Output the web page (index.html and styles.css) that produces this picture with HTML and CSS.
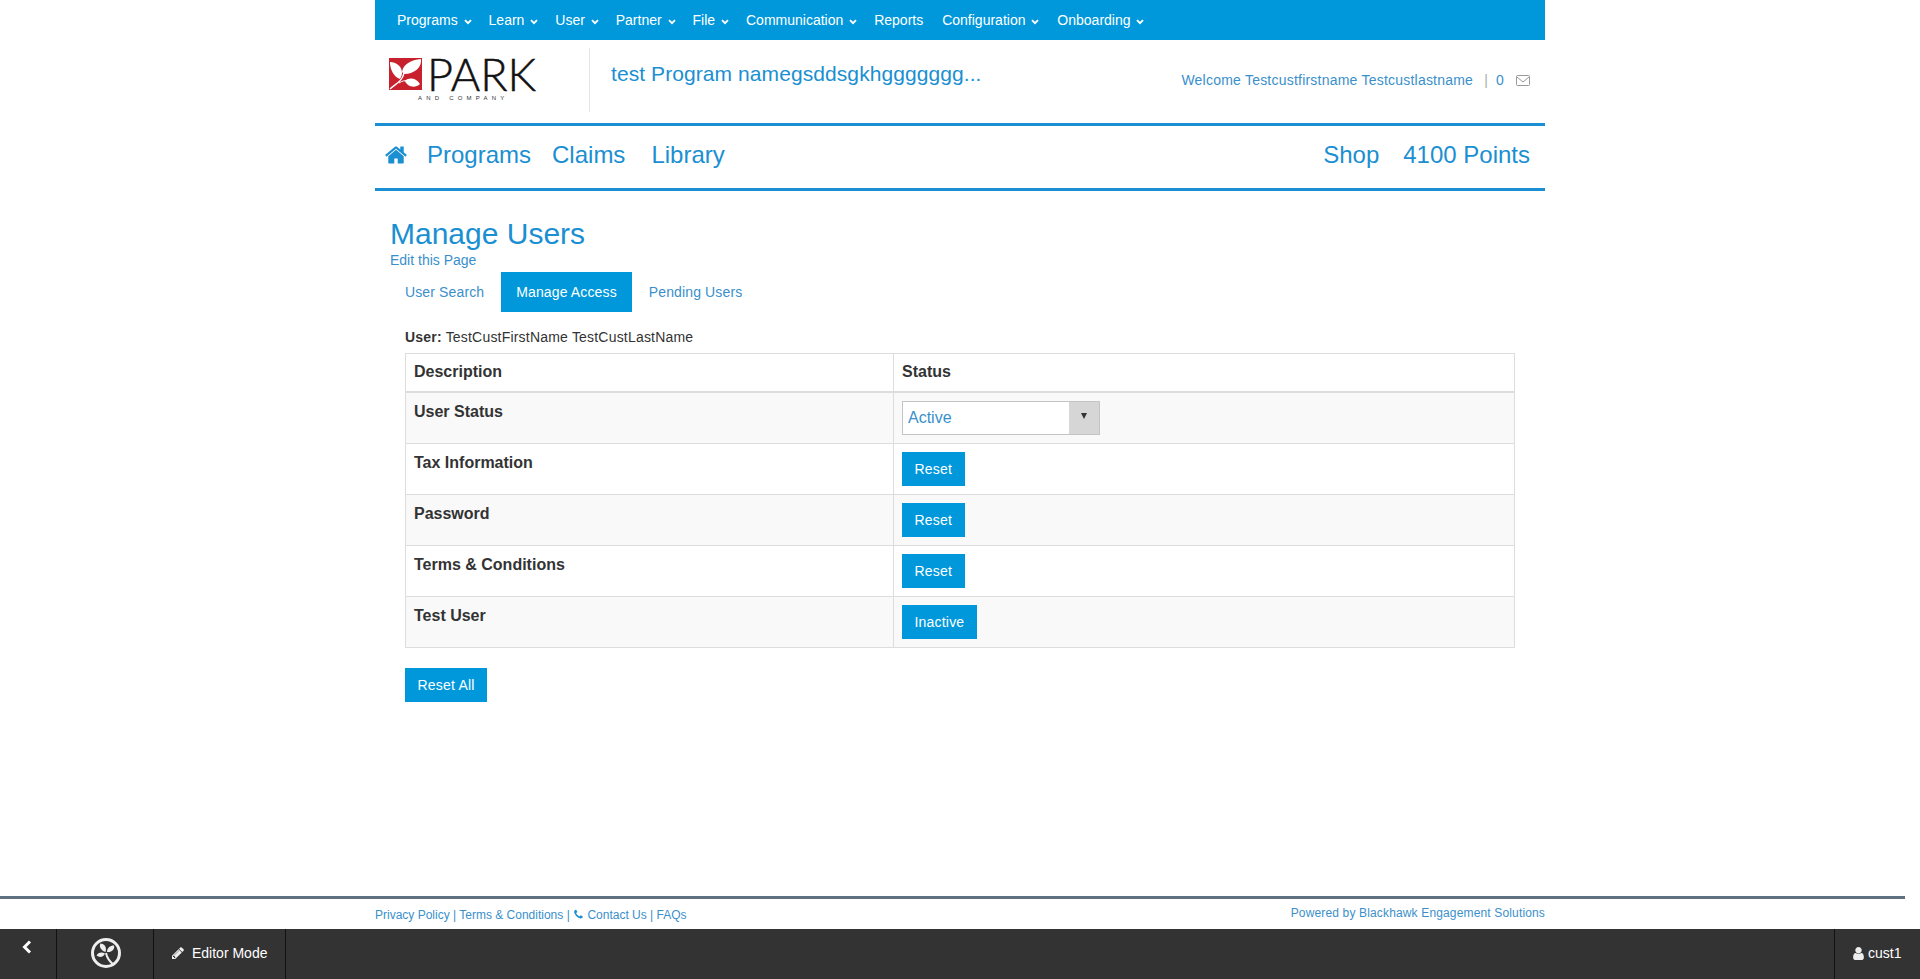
FILE: index.html
```html
<!DOCTYPE html>
<html lang="en">
<head>
    <meta charset="UTF-8">
    <title>Manage Users</title>
    <link rel="stylesheet" href="styles.css">
</head>
<body>
<svg class="icon_defs" width="0" height="0">
    <symbol id="chevron_down" viewBox="0 0 8 6">
        <polyline points="1,1.2 4,4.2 7,1.2" fill="none" stroke="#fff" stroke-width="1.9"/>
    </symbol>
</svg>

<div class="wrap">
    <ul class="top_menu">
        <li>Programs <svg class="chevron"><use href="#chevron_down"/></svg></li>
        <li>Learn <svg class="chevron"><use href="#chevron_down"/></svg></li>
        <li>User <svg class="chevron"><use href="#chevron_down"/></svg></li>
        <li>Partner <svg class="chevron"><use href="#chevron_down"/></svg></li>
        <li>File <svg class="chevron"><use href="#chevron_down"/></svg></li>
        <li>Communication <svg class="chevron"><use href="#chevron_down"/></svg></li>
        <li>Reports</li>
        <li class="menu_config">Configuration <svg class="chevron"><use href="#chevron_down"/></svg></li>
        <li class="menu_onboard">Onboarding <svg class="chevron"><use href="#chevron_down"/></svg></li>
    </ul>

    <div class="header">
        <div class="logo">
            <svg class="logo_mark" viewBox="0 0 33 32">
                <rect width="33" height="32" fill="#c9202e"/>
                <path d="M13 14C14 6 22 2 32 1 33 9 26 16 15 16Z" fill="#fff"/>
                <path d="M1 4C7 4 13 8 13 15 13 17 12 19 11 21 5 19 1 12 1 4Z" fill="#fff"/>
                <path d="M16 23C20 19 27 20 31 26 27 30 19 30 16 23Z" fill="#fff"/>
                <path d="M1 31C6 26 13 24 15 15" fill="none" stroke="#fff" stroke-width="1.4"/>
                <path d="M10 25C13 23 16 22 20 23" fill="none" stroke="#fff" stroke-width="1"/>
            </svg>
            <div class="logo_text">
                <span class="logo_name">PARK</span>
                <span class="logo_sub">AND COMPANY</span>
            </div>
        </div>
        <div class="program_name">test Program namegsddsgkhggggggg...</div>
        <div class="welcome">
            <span>Welcome Testcustfirstname Testcustlastname</span>
            <span class="welcome_sep">|</span>
            <span>0</span>
            <svg class="envelope" viewBox="0 0 14 11">
                <rect x="0.5" y="0.5" width="13" height="10" rx="1" fill="none" stroke="#999"/>
                <polyline points="1,2 7,7 13,2" fill="none" stroke="#999"/>
            </svg>
        </div>
    </div>

    <div class="main_nav">
        <svg class="home_icon" viewBox="0 0 1792 1792">
            <path d="M1472 992v480q0 26-19 45t-45 19h-384v-384h-256v384h-384q-26 0-45-19t-19-45v-480q0-1 .5-3t.5-3l575-474 575 474q1 2 1 6zm223-69l-62 74q-8 9-21 11h-3q-13 0-21-7l-692-577-692 577q-12 8-24 7-13-2-21-11l-62-74q-8-10-7-23.500t11-21.500l719-599q32-26 76-26t76 26l244 204v-195q0-14 9-23t23-9h192q14 0 23 9t9 23v408l219 182q10 8 11 21.500t-7 23.500z"/>
        </svg>
        <a class="nav_programs">Programs</a>
        <a class="nav_claims">Claims</a>
        <a class="nav_library">Library</a>
        <a class="nav_shop">Shop</a>
        <a class="nav_points">4100 Points</a>
    </div>

    <h1 class="page_title">Manage Users</h1>
    <a class="edit_link">Edit this Page</a>

    <div class="content">
        <ul class="tabs">
            <li>User Search</li>
            <li class="tab_active">Manage Access</li>
            <li>Pending Users</li>
        </ul>

        <p class="user_line"><b>User:</b> TestCustFirstName TestCustLastName</p>

        <table class="access_table">
            <tr>
                <th class="col_desc">Description</th>
                <th>Status</th>
            </tr>
            <tr>
                <td class="row_label">User Status</td>
                <td>
                    <div class="status_select">
                        <span class="select_value">Active</span>
                        <span class="select_arrow"><i class="arrow_down"></i></span>
                    </div>
                </td>
            </tr>
            <tr>
                <td class="row_label">Tax Information</td>
                <td><button class="btn">Reset</button></td>
            </tr>
            <tr>
                <td class="row_label">Password</td>
                <td><button class="btn">Reset</button></td>
            </tr>
            <tr>
                <td class="row_label">Terms &amp; Conditions</td>
                <td><button class="btn">Reset</button></td>
            </tr>
            <tr>
                <td class="row_label">Test User</td>
                <td><button class="btn">Inactive</button></td>
            </tr>
        </table>

        <button class="btn btn_all">Reset All</button>
    </div>
</div>

<div class="footer">
    <div class="footer_links">
        <span class="footer_left">Privacy Policy | Terms &amp; Conditions |
            <svg class="phone_icon" viewBox="0 0 1792 1792">
                <path d="M1600 1240q0 27-10 70.500t-21 68.500q-21 50-122 106-94 51-186 51-27 0-53-3.500t-57.500-12.500-47-14.500-55.500-20.500-49-18q-98-35-175-83-127-79-264-216t-216-264q-48-77-83-175-3-9-18-49t-20.500-55.500-14.500-47-12.500-57.500-3.500-53q0-92 51-186 56-101 106-122 25-11 68.500-21t70.500-10q14 0 21 3 18 6 53 76 11 19 30 54t35 63.500 31 53.500q3 4 17.500 25t21.500 35.500 7 28.500q0 20-28.500 50t-62 55-62 53-28.500 46q0 9 5 22.500t8.500 20.500 14 24 11.500 19q76 137 174 235t235 174q2 1 19 11.500t24 14 20.500 8.500 22.500 5q18 0 46-28.500t53-62 55-62 50-28.500q14 0 28.500 7t35.500 21.500 25 17.500q25 15 53.500 31t63.500 35 54 30q70 35 76 53 3 7 3 21z"/>
            </svg>
            Contact Us | FAQs</span>
        <span class="footer_right">Powered by Blackhawk Engagement Solutions</span>
    </div>
</div>

<div class="editor_bar">
    <div class="bar_item bar_back">
        <svg width="10" height="14" viewBox="0 0 10 14">
            <polyline points="8,1.500 2.500,7 8,12.500" fill="none" stroke="#fff" stroke-width="3"/>
        </svg>
    </div>
    <div class="bar_item bar_brand">
        <svg width="32" height="34" viewBox="0 0 32 34">
            <circle cx="16" cy="16" r="13.500" fill="none" stroke="#eee" stroke-width="3"/>
            <path d="M15.500 15C10 13 9 9 10.500 6.500 14.500 7 17 10 15.500 15Z" fill="#eee"/>
            <path d="M17 15C17 11 20 8.500 24 8.500 25 12 22 15.500 17 15Z" fill="#eee"/>
            <path d="M15 16.500C11.500 14.500 8 15.500 6.500 18.500 10 21 13.500 20 15 16.500Z" fill="#eee"/>
            <path d="M16 16C17 21 20 25 24 28" fill="none" stroke="#eee" stroke-width="2"/>
        </svg>
    </div>
    <div class="bar_item bar_editor">
        <svg class="pencil_icon" viewBox="0 0 1792 1792">
            <path d="M491 1536l91-91-235-235-91 91v107h128v128h107zm523-928q0-22-22-22-10 0-17 7l-542 542q-7 7-7 17 0 22 22 22 10 0 17-7l542-542q7-7 7-17zm-54-192l416 416-832 832h-416v-416zm683 96q0 53-37 90l-166 166-416-416 166-165q36-38 90-38 53 0 91 38l235 234q37 39 37 91z"/>
        </svg>
        Editor Mode
    </div>
    <div class="bar_item bar_user">
        <svg class="user_icon" viewBox="0 0 1792 1792">
            <path d="M1536 1399q0 109-62.500 187t-150.500 78h-854q-88 0-150.500-78t-62.500-187q0-85 8.500-160.500t31.500-152 58.500-131 94-89 134.500-34.500q131 128 313 128t313-128q76 0 134.500 34.500t94 89 58.500 131 31.500 152 8.500 160.500zm-256-887q0 159-112.500 271.500t-271.500 112.500-271.500-112.500-112.500-271.500 112.500-271.500 271.500-112.500 271.500 112.500 112.500 271.500z"/>
        </svg>
        cust1
    </div>
</div>
</body>
</html>
```

FILE: styles.css
```css
* {
    margin: 0;
    padding: 0;
    box-sizing: border-box;
}

html, body {
    height: 100%;
}

body {
    display: flex;
    flex-direction: column;
    min-height: 979px;
    font-family: "Liberation Sans", Arial, sans-serif;
    font-size: 14px;
    line-height: 20px;
    color: #333;
    background-color: #fff;
    overflow: hidden;
}

ul {
    list-style: none;
}

.icon_defs {
    position: absolute;
}

.wrap {
    flex: 1;
    width: 1170px;
    margin: 0 auto;
}

/* top menu */
.top_menu {
    display: flex;
    gap: 17px;
    height: 40px;
    padding-left: 22px;
    align-items: center;
    background-color: #0098db;
    color: #fff;
}

.chevron {
    width: 8px;
    height: 6px;
    margin-left: 2px;
}

.menu_config {
    margin-left: 2px;
}

.menu_onboard {
    margin-left: 1px;
}

/* header */
.header {
    display: flex;
    height: 86px;
    border-bottom: 3px solid #1a8fd1;
}

.logo {
    display: flex;
    width: 215px;
    height: 64px;
    margin-top: 8px;
    padding: 10px 0 0 14px;
    border-right: 1px solid #e5e5e5;
}

.logo_mark {
    width: 33px;
    height: 32px;
}

.logo_text {
    margin-left: 5px;
    width: 110px;
}

.logo_name {
    display: block;
    font-family: Lato, "Liberation Sans", sans-serif;
    font-weight: 300;
    font-size: 45px;
    line-height: 32px;
    -webkit-text-stroke: 0.5px #111;
    color: #111;
}

.logo_sub {
    display: block;
    margin: 4px 0 0 -9px;
    font-size: 6px;
    line-height: 8px;
    letter-spacing: 4.2px;
    white-space: nowrap;
    color: #333;
}

.program_name {
    margin: 22px 0 0 21px;
    font-size: 21px;
    line-height: 24px;
    letter-spacing: 0.08px;
    color: #1a8fd1;
}

.welcome {
    display: flex;
    align-items: center;
    margin: 30px 15px 0 auto;
    height: 20px;
    letter-spacing: 0.22px;
    color: #3a8fcb;
}

.welcome_sep {
    margin: 0 8px 0 11px;
    color: #aaa;
}

.envelope {
    width: 14px;
    height: 11px;
    margin-left: 12px;
}

/* main nav */
.main_nav {
    display: flex;
    align-items: center;
    height: 65px;
    padding-bottom: 4px;
    border-bottom: 3px solid #1a8fd1;
    font-size: 24px;
    color: #1a8fd1;
}

.home_icon {
    width: 24px;
    height: 24px;
    margin-left: 9px;
    fill: #1a8fd1;
}

.nav_programs {
    margin-left: 19px;
}

.nav_claims {
    margin-left: 21px;
}

.nav_library {
    margin-left: 26px;
}

.nav_shop {
    margin-left: auto;
}

.nav_points {
    margin: 0 15px 0 24px;
}

/* page title */
.page_title {
    margin: 26px 0 0 15px;
    font-size: 30px;
    font-weight: normal;
    line-height: 33px;
    color: #1a8fd1;
}

.edit_link {
    display: block;
    margin: 0 0 2px 15px;
    color: #3a8fcb;
}

.content {
    padding-left: 30px;
}

.tabs {
    display: flex;
    gap: 2px;
    margin-left: -15px;
    letter-spacing: 0.13px;
    color: #3a8fcb;
}

.tabs li {
    padding: 10px 15px;
}

.tabs .tab_active {
    background-color: #0098db;
    color: #fff;
}

.user_line {
    margin: 15px 0 6px;
    letter-spacing: 0.2px;
}

/* table */
.access_table {
    width: 1110px;
    border-collapse: collapse;
    table-layout: fixed;
}

.access_table th, .access_table td {
    padding: 8px;
    border: 1px solid #ddd;
    text-align: left;
    vertical-align: top;
    background-color: #fff;
}

.access_table th {
    border-bottom-width: 2px;
    padding-top: 7px;
    font-size: 16px;
    line-height: 22px;
}

.col_desc {
    width: 488px;
}

.access_table tr:nth-child(even) td {
    background-color: #f9f9f9;
}

.row_label {
    font-size: 16px;
    font-weight: bold;
    line-height: 22px;
}

.status_select {
    display: flex;
    width: 198px;
    height: 34px;
    border: 1px solid #c4c4c4;
    background-color: #fff;
}

.select_value {
    flex: 1;
    padding-left: 5px;
    font-size: 16px;
    line-height: 32px;
    color: #3a8fcb;
}

.select_arrow {
    display: flex;
    justify-content: center;
    width: 30px;
    padding-top: 11px;
    background-color: #d6d6d6;
}

.arrow_down {
    width: 0;
    height: 0;
    border-left: 3.5px solid transparent;
    border-right: 3.5px solid transparent;
    border-top: 6px solid #333;
}

.btn {
    display: block;
    height: 34px;
    padding: 0 12.5px;
    border: 0;
    font-family: inherit;
    font-size: 14px;
    letter-spacing: 0.2px;
    color: #fff;
    background-color: #0098db;
}

.btn_all {
    margin-top: 20px;
}

/* footer */
.footer {
    width: 1905px;
    height: 33px;
    border-top: 3px solid #5f7180;
}

.footer_links {
    display: flex;
    justify-content: space-between;
    width: 1170px;
    margin-left: 375px;
    font-size: 12px;
    color: #3a8fcb;
}

.footer_left {
    margin-top: 6px;
}

.footer_right {
    margin-top: 4px;
    letter-spacing: 0.15px;
}

.phone_icon {
    width: 11px;
    height: 11px;
    vertical-align: -1px;
    fill: #1a8fd1;
}

.editor_bar {
    display: flex;
    height: 50px;
    background-color: #333;
    color: #fff;
}

.bar_item {
    display: flex;
    align-items: center;
    height: 50px;
    border-right: 1px solid #111;
}

.bar_back {
    width: 57px;
    padding: 0 0 14px 22px;
}

.bar_brand {
    width: 97px;
    padding-left: 33px;
}

.bar_editor {
    width: 132px;
    padding: 0 0 2px 17px;
}

.pencil_icon {
    width: 14px;
    height: 14px;
    margin-right: 7px;
    fill: #eee;
}

.bar_user {
    margin-left: auto;
    width: 86px;
    padding: 0 0 2px 16px;
    border-right: 0;
    border-left: 1px solid #111;
}

.user_icon {
    width: 15px;
    height: 15px;
    margin-right: 2px;
    fill: #eee;
}
```
